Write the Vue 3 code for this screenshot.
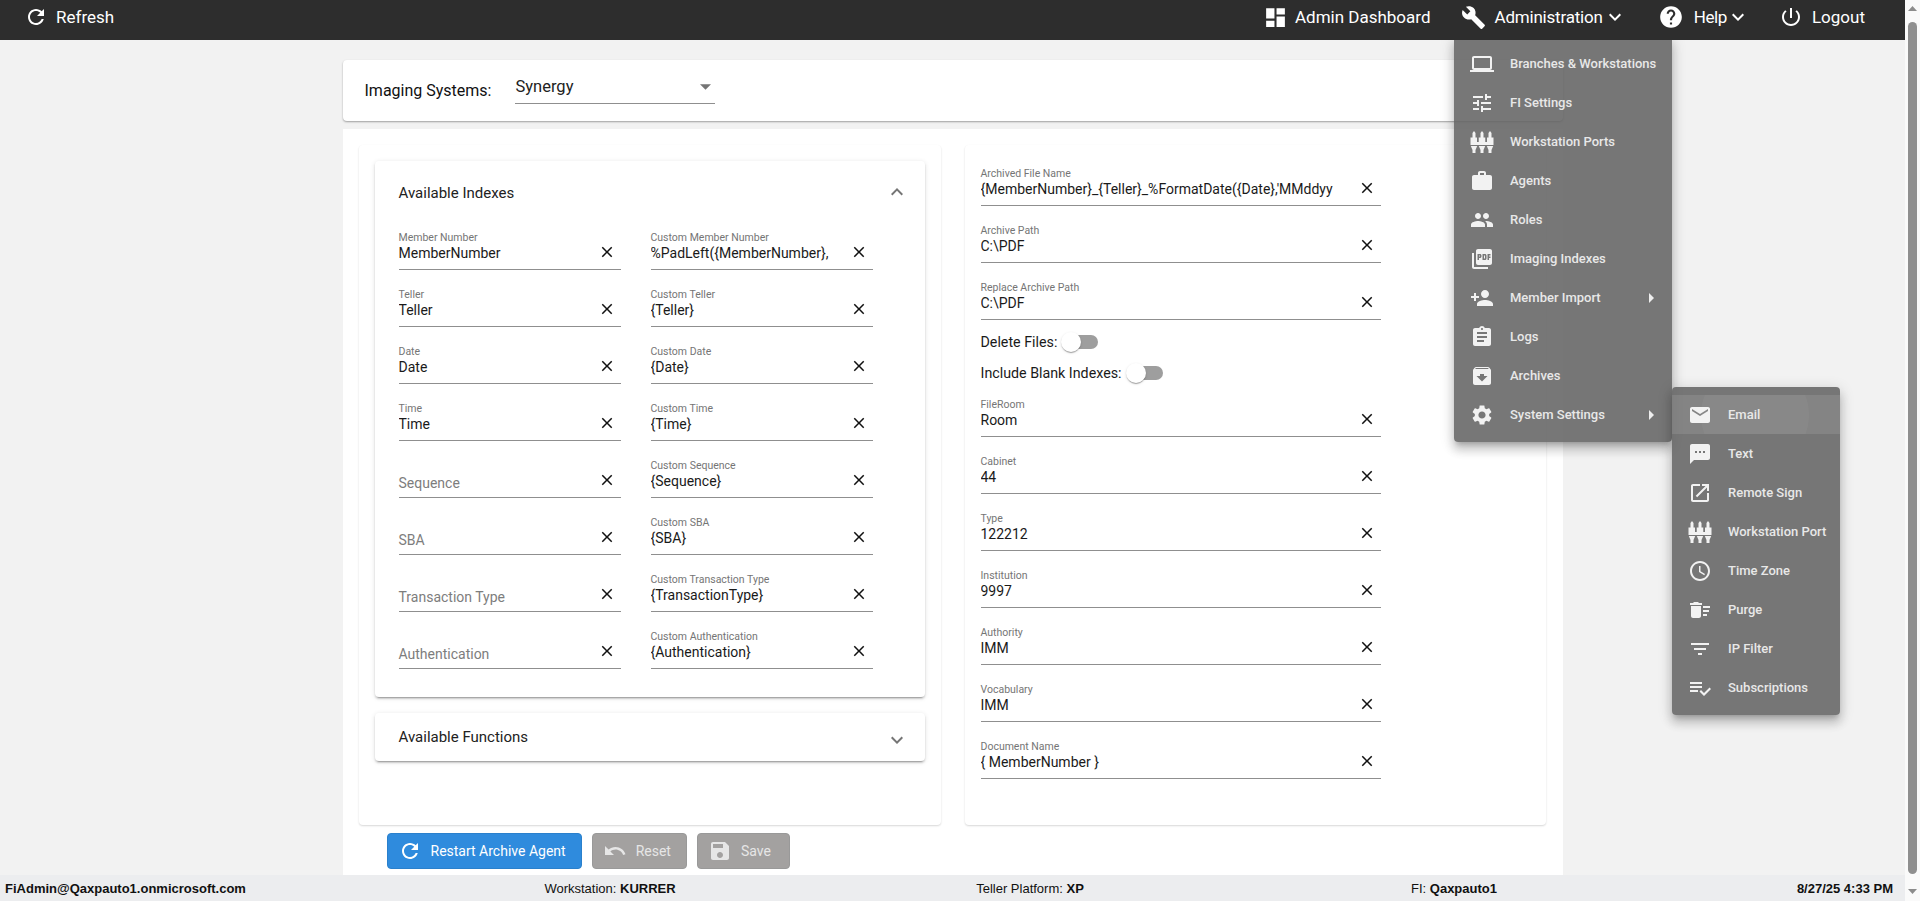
<script setup>
const P = {
  refresh: 'M17.65 6.35C16.2 4.9 14.21 4 12 4c-4.42 0-7.99 3.58-7.99 8s3.57 8 7.99 8c3.73 0 6.84-2.55 7.73-6h-2.08c-.82 2.33-3.04 4-5.65 4-3.31 0-6-2.69-6-6s2.69-6 6-6c1.66 0 3.14.69 4.22 1.78L13 11h7V4l-2.35 2.35z',
  dashboard: 'M3 13h8V3H3v10zm0 8h8v-6H3v6zm10 0h8V11h-8v10zm0-18v6h8V3h-8z',
  build: 'M22.7 19l-9.1-9.1c.9-2.3.4-5-1.5-6.9-2-2-5-2.4-7.4-1.3L9 6 6 9 1.6 4.7C.4 7.1.9 10.1 2.9 12.1c1.9 1.9 4.6 2.4 6.9 1.5l9.1 9.1c.4.4 1 .4 1.4 0l2.3-2.3c.5-.4.5-1.1.1-1.4z',
  help: 'M12 2C6.48 2 2 6.48 2 12s4.48 10 10 10 10-4.48 10-10S17.52 2 12 2zm1 17h-2v-2h2v2zm2.07-7.75l-.9.92C13.45 12.9 13 13.5 13 15h-2v-.5c0-1.1.45-2.1 1.17-2.83l1.24-1.26c.37-.36.59-.86.59-1.41 0-1.1-.9-2-2-2s-2 .9-2 2H8c0-2.21 1.79-4 4-4s4 1.79 4 4c0 .88-.36 1.68-.93 2.25z',
  power: 'M13 3h-2v10h2V3zm4.83 2.17l-1.42 1.42C17.99 7.86 19 9.81 19 12c0 3.87-3.13 7-7 7s-7-3.13-7-7c0-2.19 1.01-4.14 2.58-5.42L6.17 5.17C4.23 6.82 3 9.26 3 12c0 4.97 4.03 9 9 9s9-4.03 9-9c0-2.74-1.23-5.18-3.17-6.83z',
  more: 'M16.59 8.59L12 13.17 7.41 8.59 6 10l6 6 6-6z',
  less: 'M12 8l-6 6 1.41 1.41L12 10.83l4.59 4.58L18 14z',
  close: 'M19 6.41L17.59 5 12 10.59 6.41 5 5 6.41 10.59 12 5 17.59 6.41 19 12 13.41 17.59 19 19 17.59 13.41 12z',
  laptop: 'M20 18c1.1 0 1.99-.9 1.99-2L22 6c0-1.1-.9-2-2-2H4c-1.1 0-2 .9-2 2v10c0 1.1.9 2 2 2H0v2h24v-2h-4zM4 6h16v10H4V6z',
  tune: 'M3 17v2h6v-2H3zM3 5v2h10V5H3zm10 16v-2h8v-2h-8v-2h-2v6h2zM7 9v2H3v2h4v2h2V9H7zm14 4v-2H11v2h10zm-6-4h2V7h4V5h-4V3h-2v6z',
  ports: 'M2.500 8V3L4 1l1.500 2v5zM10.500 8V3L12 1l1.500 2v5zM18.500 8V3L20 1l1.500 2v5zM.5 7.500h6.500v7.500H.5zM8.750 7.500h6.500v7.500h-6.500zM17 7.500h6.500v7.500H17zM.5 12h23v3H.5zM.8 16h6.400l-1.700 4v3h-3v-3zM8.800 16h6.400l-1.700 4v3h-3v-3zM16.800 16h6.400l-1.700 4v3h-3v-3z',
  work: 'M20 6h-4V4c0-1.100-.9-2-2-2h-4c-1.100 0-2 .9-2 2v2H4c-1.100 0-1.990.9-1.990 2L2 19c0 1.100.9 2 2 2h16c1.100 0 2-.9 2-2V8c0-1.100-.9-2-2-2zm-6 0h-4V4h4v2z',
  people: 'M16 11c1.660 0 2.990-1.340 2.990-3S17.660 5 16 5c-1.660 0-3 1.340-3 3s1.340 3 3 3zm-8 0c1.660 0 2.990-1.340 2.990-3S9.660 5 8 5C6.340 5 5 6.340 5 8s1.340 3 3 3zm0 2c-2.330 0-7 1.170-7 3.500V19h14v-2.500c0-2.330-4.670-3.500-7-3.500zm8 0c-.29 0-.62.02-.97.05 1.160.84 1.970 1.970 1.970 3.450V19h6v-2.500c0-2.330-4.670-3.500-7-3.500z',
  pdf: 'M20 2H8c-1.100 0-2 .9-2 2v12c0 1.100.9 2 2 2h12c1.100 0 2-.9 2-2V4c0-1.100-.9-2-2-2zm-8.500 7.500c0 .83-.67 1.500-1.500 1.500H9v2H7.500V7H10c.83 0 1.500.67 1.500 1.500v1zm5 2c0 .83-.67 1.500-1.500 1.500h-2.500V7H15c.83 0 1.500.67 1.500 1.500v3zm4-3H19v1h1.500V11H19v2h-1.500V7h3v1.500zM9 9.500h1v-1H9v1zM4 6H2v14c0 1.100.9 2 2 2h14v-2H4V6zm10 5.500h1v-3h-1v3z',
  personAdd: 'M15 12c2.210 0 4-1.790 4-4s-1.790-4-4-4-4 1.790-4 4 1.790 4 4 4zm-9-2V7H4v3H1v2h3v3h2v-3h3v-2H6zm9 4c-2.670 0-8 1.340-8 4v2h16v-2c0-2.660-5.330-4-8-4z',
  assignment: 'M19 3h-4.180C14.400 1.840 13.300 1 12 1c-1.300 0-2.400.84-2.820 2H5c-1.100 0-2 .9-2 2v14c0 1.100.9 2 2 2h14c1.100 0 2-.9 2-2V5c0-1.100-.9-2-2-2zm-7 0c.55 0 1 .45 1 1s-.45 1-1 1-1-.45-1-1 .45-1 1-1zm2 14H7v-2h7v2zm3-4H7v-2h10v2zm0-4H7V7h10v2z',
  archive: 'M20.540 5.230l-1.390-1.680C18.880 3.210 18.470 3 18 3H6c-.47 0-.88.21-1.160.55L3.460 5.230C3.170 5.570 3 6.020 3 6.500V19c0 1.100.9 2 2 2h14c1.100 0 2-.9 2-2V6.500c0-.48-.17-.93-.46-1.270zM12 17.500L6.500 12H10v-2h4v2h3.500L12 17.500zM5.120 5l.81-1h12l.94 1H5.120z',
  settings: 'M19.140 12.940c.04-.3.06-.61.06-.94 0-.32-.02-.64-.07-.94l2.030-1.580c.18-.14.23-.41.12-.61l-1.920-3.320c-.12-.22-.37-.29-.59-.22l-2.390.96c-.5-.38-1.030-.7-1.620-.94l-.36-2.540c-.04-.24-.24-.41-.48-.41h-3.840c-.24 0-.43.17-.47.41l-.36 2.540c-.59.24-1.130.57-1.620.94l-2.390-.96c-.22-.08-.47 0-.59.22L2.740 8.870c-.12.21-.08.47.12.61l2.030 1.580c-.05.3-.09.63-.09.94s.02.64.07.94l-2.030 1.580c-.18.14-.23.41-.12.61l1.920 3.320c.12.22.37.29.59.22l2.390-.96c.5.38 1.030.7 1.620.94l.36 2.540c.05.24.24.41.48.41h3.840c.24 0 .44-.17.47-.41l.36-2.540c.59-.24 1.130-.56 1.620-.94l2.390.96c.22.08.47 0 .59-.22l1.920-3.320c.12-.22.07-.47-.12-.61l-2.010-1.580zM12 15.600c-1.980 0-3.600-1.620-3.600-3.600s1.620-3.600 3.600-3.600 3.600 1.620 3.600 3.600-1.620 3.600-3.600 3.600z',
  email: 'M20 4H4c-1.100 0-1.990.9-1.990 2L2 18c0 1.100.9 2 2 2h16c1.100 0 2-.9 2-2V6c0-1.100-.9-2-2-2zm0 4l-8 5-8-5V6l8 5 8-5v2z',
  sms: 'M20 2H4c-1.100 0-1.990.9-1.990 2L2 22l4-4h14c1.100 0 2-.9 2-2V4c0-1.100-.9-2-2-2zM9 11H7V9h2v2zm4 0h-2V9h2v2zm4 0h-2V9h2v2z',
  open: 'M19 19H5V5h7V3H5c-1.110 0-2 .9-2 2v14c0 1.100.89 2 2 2h14c1.100 0 2-.9 2-2v-7h-2v7zM14 3v2h3.590l-9.830 9.830 1.410 1.410L19 6.410V10h2V3h-7z',
  clock: 'M11.990 2C6.470 2 2 6.480 2 12s4.470 10 9.990 10C17.520 22 22 17.520 22 12S17.520 2 11.990 2zM12 20c-4.420 0-8-3.580-8-8s3.580-8 8-8 8 3.580 8 8-3.580 8-8 8zm.5-13H11v6l5.250 3.150.75-1.230-4.500-2.670z',
  sweep: 'M15 16h4v2h-4zm0-8h7v2h-7zm0 4h6v2h-6zM3 18c0 1.100.9 2 2 2h6c1.100 0 2-.9 2-2V8H3v10zM14 5h-3l-1-1H6L5 5H2v2h12z',
  filter: 'M10 18h4v-2h-4v2zM3 6v2h18V6H3zm3 7h12v-2H6v2z',
  playlist: 'M14 10H2v2h12v-2zm0-4H2v2h12V6zM2 16h8v-2H2v2zm19.500-4.500L23 13l-6.990 7-4.510-4.500L13 14l3.010 3 5.490-5.500z',
  undo: 'M12.500 8c-2.650 0-5.050.99-6.900 2.600L2 7v9h9l-3.620-3.620c1.390-1.160 3.160-1.880 5.120-1.880 3.540 0 6.550 2.310 7.600 5.500l2.370-.78C21.080 11.030 17.150 8 12.500 8z',
  save: 'M17 3H5c-1.110 0-2 .9-2 2v14c0 1.100.89 2 2 2h14c1.100 0 2-.9 2-2V7l-4-4zm-5 16c-1.660 0-3-1.340-3-3s1.340-3 3-3 3 1.340 3 3-1.340 3-3 3zm3-10H5V5h10v4z'
}

const indexes = [
  ['Member Number', 'MemberNumber', 'Custom Member Number', '%PadLeft({MemberNumber},'],
  ['Teller', 'Teller', 'Custom Teller', '{Teller}'],
  ['Date', 'Date', 'Custom Date', '{Date}'],
  ['Time', 'Time', 'Custom Time', '{Time}'],
  ['Sequence', '', 'Custom Sequence', '{Sequence}'],
  ['SBA', '', 'Custom SBA', '{SBA}'],
  ['Transaction Type', '', 'Custom Transaction Type', '{TransactionType}'],
  ['Authentication', '', 'Custom Authentication', '{Authentication}']
]
const indexFields = indexes.flatMap(r => [
  { label: r[0], value: r[1] },
  { label: r[2], value: r[3] }
])
const archiveTop = [
  { label: 'Archived File Name', value: "{MemberNumber}_{Teller}_%FormatDate({Date},'MMddyy" },
  { label: 'Archive Path', value: 'C:\\PDF' },
  { label: 'Replace Archive Path', value: 'C:\\PDF' }
]
const archiveBottom = [
  { label: 'FileRoom', value: 'Room' },
  { label: 'Cabinet', value: '44' },
  { label: 'Type', value: '122212' },
  { label: 'Institution', value: '9997' },
  { label: 'Authority', value: 'IMM' },
  { label: 'Vocabulary', value: 'IMM' },
  { label: 'Document Name', value: '{ MemberNumber }' }
]
const adminMenu = [
  { t: 'Branches & Workstations', i: 'laptop' },
  { t: 'FI Settings', i: 'tune' },
  { t: 'Workstation Ports', i: 'ports' },
  { t: 'Agents', i: 'work' },
  { t: 'Roles', i: 'people' },
  { t: 'Imaging Indexes', i: 'pdf' },
  { t: 'Member Import', i: 'personAdd', sub: true },
  { t: 'Logs', i: 'assignment' },
  { t: 'Archives', i: 'archive' },
  { t: 'System Settings', i: 'settings', sub: true }
]
const sysMenu = [
  { t: 'Email', i: 'email', active: true },
  { t: 'Text', i: 'sms' },
  { t: 'Remote Sign', i: 'open' },
  { t: 'Workstation Port', i: 'ports' },
  { t: 'Time Zone', i: 'clock' },
  { t: 'Purge', i: 'sweep' },
  { t: 'IP Filter', i: 'filter' },
  { t: 'Subscriptions', i: 'playlist' }
]
</script>

<template>
  <div class="app">
    <div class="viewport">
      <header class="topbar">
        <div class="nav-item refresh">
          <svg class="ic" viewBox="0 0 24 24" width="24" height="24"><path :d="P.refresh" /></svg>
          <span>Refresh</span>
        </div>
        <nav class="nav">
          <div class="nav-item">
            <svg class="ic" viewBox="0 0 24 24" width="25" height="25"><path :d="P.dashboard" /></svg>
            <span>Admin Dashboard</span>
          </div>
          <div class="nav-item wrench">
            <svg class="ic" viewBox="0 0 24 24" width="25" height="25"><path :d="P.build" /></svg>
            <span>Administration</span>
            <svg class="ic chev" viewBox="0 0 24 24" width="24" height="24"><path :d="P.more" /></svg>
          </div>
          <div class="nav-item help">
            <svg class="ic" viewBox="0 0 24 24" width="26" height="26"><path :d="P.help" /></svg>
            <span>Help</span>
            <svg class="ic chev" viewBox="0 0 24 24" width="24" height="24"><path :d="P.more" /></svg>
          </div>
          <div class="nav-item logout">
            <svg class="ic" viewBox="0 0 24 24" width="24" height="24"><path :d="P.power" /></svg>
            <span>Logout</span>
          </div>
        </nav>
      </header>

      <main class="main">
        <div class="container">
          <section class="system-card">
            <span class="system-label">Imaging Systems:</span>
            <div class="select">
              <span>Synergy</span>
              <svg viewBox="0 0 10 5" width="11" height="6"><path d="M0 0h10L5 5z" /></svg>
            </div>
          </section>

          <section class="sheet">
            <div class="columns">
              <div class="col-card left-card">
                <div class="panel">
                  <div class="panel-head open">
                    <span>Available Indexes</span>
                    <svg viewBox="0 0 24 24" width="24" height="24"><path :d="P.less" /></svg>
                  </div>
                  <div class="index-grid">
                    <div v-for="f in indexFields" :key="f.label" class="field">
                      <template v-if="f.value">
                        <label>{{ f.label }}</label>
                        <div class="value">{{ f.value }}</div>
                      </template>
                      <div v-else class="placeholder">{{ f.label }}</div>
                      <svg class="clear" viewBox="0 0 24 24" width="18" height="18"><path :d="P.close" /></svg>
                    </div>
                  </div>
                </div>
                <div class="panel closed">
                  <div class="panel-head">
                    <span>Available Functions</span>
                    <svg class="down" viewBox="0 0 24 24" width="24" height="24"><path :d="P.more" /></svg>
                  </div>
                </div>
              </div>

              <div class="col-card right-card">
                <div class="stack">
                  <div v-for="f in archiveTop" :key="f.label" class="field">
                    <label>{{ f.label }}</label>
                    <div class="value">{{ f.value }}</div>
                    <svg class="clear" viewBox="0 0 24 24" width="18" height="18"><path :d="P.close" /></svg>
                  </div>
                </div>
                <div class="toggles">
                  <div class="toggle-row">
                    <span>Delete Files:</span>
                    <div class="toggle"><i></i></div>
                  </div>
                  <div class="toggle-row">
                    <span>Include Blank Indexes:</span>
                    <div class="toggle"><i></i></div>
                  </div>
                </div>
                <div class="stack">
                  <div v-for="f in archiveBottom" :key="f.label" class="field">
                    <label>{{ f.label }}</label>
                    <div class="value">{{ f.value }}</div>
                    <svg class="clear" viewBox="0 0 24 24" width="18" height="18"><path :d="P.close" /></svg>
                  </div>
                </div>
              </div>
            </div>

            <div class="actions">
              <button class="btn primary">
                <svg viewBox="0 0 24 24" width="24" height="24"><path :d="P.refresh" /></svg>
                Restart Archive Agent
              </button>
              <button class="btn disabled">
                <svg viewBox="0 0 24 24" width="24" height="24"><path :d="P.undo" /></svg>
                Reset
              </button>
              <button class="btn disabled save">
                <svg viewBox="0 0 24 24" width="24" height="24"><path :d="P.save" /></svg>
                Save
              </button>
            </div>
          </section>
        </div>
      </main>

      <footer class="status">
        <b class="s-user">FiAdmin@Qaxpauto1.onmicrosoft.com</b>
        <span class="s-mid">Workstation: <b>KURRER</b></span>
        <span class="s-mid">Teller Platform: <b>XP</b></span>
        <span class="s-mid">FI: <b>Qaxpauto1</b></span>
        <b class="s-date">8/27/25 4:33 PM</b>
      </footer>
    </div>

    <div class="scrollbar">
      <svg class="arrow" viewBox="0 0 9 5" width="9" height="5"><path d="M4.500 0L9 5H0z" /></svg>
      <div class="thumb"></div>
      <svg class="arrow" viewBox="0 0 9 5" width="9" height="5"><path d="M0 0h9L4.500 5z" /></svg>
    </div>

    <div class="menu admin-menu">
      <div v-for="m in adminMenu" :key="m.t" class="menu-row">
        <svg class="menu-ic" viewBox="0 0 24 24" width="24" height="24"><path :d="P[m.i]" /></svg>
        <span>{{ m.t }}</span>
        <svg v-if="m.sub" class="caret" viewBox="0 0 5 10" width="5" height="10"><path d="M0 0l5 5-5 5z" /></svg>
      </div>
    </div>
    <div class="menu sys-menu">
      <div v-for="m in sysMenu" :key="m.t" class="menu-row" :class="{ active: m.active }">
        <svg class="menu-ic" viewBox="0 0 24 24" width="24" height="24"><path :d="P[m.i]" /></svg>
        <span>{{ m.t }}</span>
      </div>
    </div>
  </div>
</template>

<style>
html, body { margin: 0; overflow: hidden; }
</style>

<style scoped>
* { box-sizing: border-box; }
.app {
  position: relative;
  display: flex;
  width: 1920px;
  height: 901px;
  overflow: hidden;
  background: #f2f2f2;
  font-family: Roboto, "Liberation Sans", sans-serif;
  color: #111;
}
.viewport { flex: 1; min-width: 0; display: flex; flex-direction: column; }
.topbar {
  position: relative;
  z-index: 5;
  flex: 0 0 40px;
  display: flex;
  align-items: center;
  justify-content: space-between;
  background: #2d2d2d;
  color: #fff;
  font-size: 17px;
  padding: 0 40px 6px 24px;
}
.ic { fill: #fff; flex: none; }
.nav { display: flex; align-items: center; gap: 30px; }
.nav-item { display: flex; align-items: center; gap: 7px; white-space: nowrap; }
.refresh { gap: 8px; }
.wrench { gap: 9px; }
.wrench span { letter-spacing: -.2px; }
.chev { margin-left: -6px; }
.wrench .chev { margin-left: -9px; }
.help { gap: 10px; margin-left: 1px; }
.help span { letter-spacing: -.4px; }
.help .chev { margin-left: -11px; }
.logout { gap: 9px; margin-left: -1px; }

.main { flex: 1; min-height: 0; overflow: hidden; }
.container {
  width: 1220px;
  height: 100%;
  margin: 0 auto;
  padding-top: 20px;
  display: flex;
  flex-direction: column;
  gap: 8px;
}
.system-card {
  flex: 0 0 61px;
  background: #fff;
  border-radius: 4px;
  box-shadow: 0 1px 2px rgba(0,0,0,.35);
  display: flex;
  align-items: center;
  padding: 0 22px;
  gap: 24px;
}
.system-label { font-size: 16px; margin-top: -1px; }
.select {
  width: 200px;
  height: 34px;
  margin-top: -7px;
  border-bottom: 1px solid #8f8f8f;
  display: flex;
  align-items: center;
  justify-content: space-between;
  padding: 0 4px 0 0;
  font-size: 16.5px;
  color: #222;
}
.select svg { fill: #757575; }

.sheet { flex: 1; min-height: 0; background: #fff; padding: 16px 16px 0; }
.columns { display: grid; grid-template-columns: 582px 581px; gap: 24px; }
.col-card {
  height: 680px;
  background: #fff;
  border-radius: 4px;
  box-shadow: 0 1px 2px rgba(0,0,0,.16);
}
.left-card { padding: 16px; }
.panel {
  background: #fff;
  border-radius: 4px;
  box-shadow: 0 3px 1px -2px rgba(0,0,0,.2), 0 2px 2px 0 rgba(0,0,0,.14), 0 1px 5px 0 rgba(0,0,0,.12);
  padding: 0 24px 28px;
  height: 536px;
}
.panel.closed { height: 48px; margin-top: 16px; padding: 0 24px; }
.panel-head {
  height: 48px;
  display: flex;
  align-items: center;
  justify-content: space-between;
  font-size: 15px;
  color: #222;
}
.panel-head.open { height: 64px; margin-bottom: 6px; }
.panel-head svg { fill: #757575; margin-right: -8px; margin-top: -3px; }
.panel-head svg.down { margin-top: 6px; }
.index-grid { display: grid; grid-template-columns: 222px 222px; column-gap: 30px; row-gap: 18px; }

.field {
  position: relative;
  height: 39px;
  padding-top: 1px;
  border-bottom: 1px solid #8f8f8f;
  min-width: 0;
}
.field label {
  display: block;
  font-size: 10.5px;
  line-height: 12px;
  color: #757575;
}
.value {
  font-size: 14px;
  line-height: 18px;
  color: #1a1a1a;
  white-space: nowrap;
  overflow: hidden;
  padding-right: 40px;
}
.placeholder {
  padding-top: 14px;
  font-size: 14px;
  line-height: 18px;
  color: #7d7d7d;
}
.clear {
  position: absolute;
  right: 5px;
  top: 12px;
  fill: #111;
}
.right-card { padding: 22px 16px 0; }
.stack { display: grid; grid-template-columns: minmax(0, 1fr); width: 400px; row-gap: 18px; }
.toggles { margin: 6px 0 10px; }
.toggle-row {
  height: 31px;
  display: flex;
  align-items: center;
  gap: 5px;
  font-size: 14.25px;
  color: #1a1a1a;
}
.toggle {
  position: relative;
  width: 36px;
  height: 14px;
  border-radius: 7px;
  background: #9e9e9e;
}
.toggle i {
  position: absolute;
  left: -1px;
  top: -3px;
  width: 20px;
  height: 20px;
  border-radius: 50%;
  background: #fff;
  box-shadow: 0 2px 1px -1px rgba(0,0,0,.2), 0 1px 1px rgba(0,0,0,.14), 0 1px 3px rgba(0,0,0,.12);
}
.actions { display: flex; gap: 10px; padding: 8px 0 0 28px; }
.btn {
  height: 36px;
  display: flex;
  align-items: center;
  gap: 9px;
  padding: 0 15px 0 10px;
  border-radius: 4px;
  font: 14px Roboto, sans-serif;
  border: 1px solid transparent;
}
.btn svg { fill: currentColor; }
.btn.primary { background: #2f8bdd; color: #fff; border-color: #2a80cc; }
.btn.disabled { background: #a3a1a0; color: #e6e6e6; border-color: #999; }
.btn.save { padding-right: 18px; }

.status {
  flex: 0 0 26px;
  background: #ecedef;
  display: grid;
  grid-template-columns: 395px 420px 420px 428px 1fr;
  align-items: center;
  font-size: 13px;
  color: #111;
  padding: 0 12px 0 5px;
  font-family: "Liberation Sans", sans-serif;
}
.s-mid { text-align: center; }
.s-date { text-align: right; }

.scrollbar {
  flex: 0 0 15px;
  background: #fafafa;
  display: flex;
  flex-direction: column;
  align-items: center;
  padding-top: 6px;
  padding-bottom: 7px;
}
.arrow { fill: #8c8c8c; flex: none; }
.thumb {
  width: 9px;
  flex: 1;
  margin: 11px 0 15px;
  background: #8f8f8f;
  border-radius: 5px;
}

.menu {
  position: absolute;
  z-index: 3;
  background: rgba(100, 100, 100, .88);
  border-radius: 4px;
  padding: 8px 0;
  box-shadow: 0 5px 5px -3px rgba(0,0,0,.2), 0 8px 10px 1px rgba(0,0,0,.14), 0 3px 14px 2px rgba(0,0,0,.12);
}
.admin-menu { left: 1454px; top: 36px; width: 218px; height: 406px; }
.sys-menu { left: 1672px; top: 387px; width: 168px; height: 328px; z-index: 4; }
.menu-row {
  position: relative;
  height: 39px;
  display: flex;
  align-items: center;
  padding-left: 16px;
  font-size: 13px;
  font-weight: 500;
  color: #e8e8e8;
  white-space: nowrap;
  overflow: hidden;
}
.menu-ic { fill: #f2f2f2; flex: none; margin-right: 16px; }
.caret { position: absolute; right: 18px; top: 15px; fill: #eee; }
.menu-row.active { background: rgba(255,255,255,.1); }
.menu-row.active::before {
  content: "";
  position: absolute;
  left: 29px;
  top: -34px;
  width: 108px;
  height: 108px;
  border-radius: 50%;
  background: rgba(255,255,255,.04);
}
</style>
